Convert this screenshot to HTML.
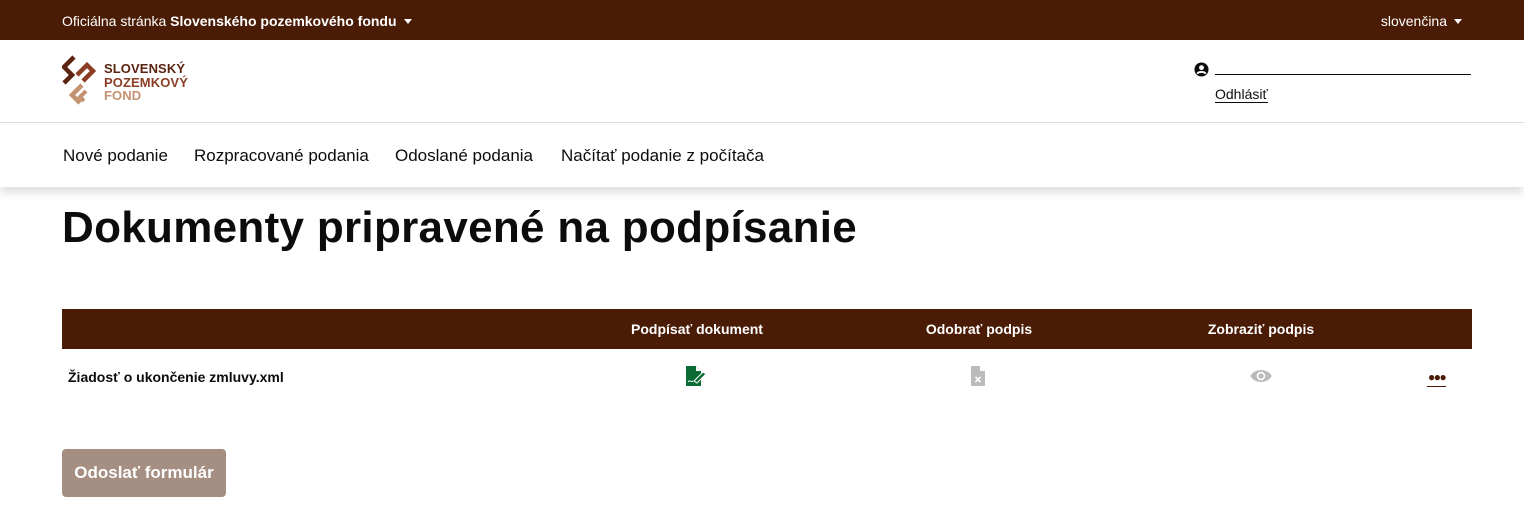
<!DOCTYPE html>
<html><head><meta charset="utf-8"><style>
*{margin:0;padding:0;box-sizing:border-box}
body{width:1524px;height:519px;overflow:hidden;background:#fff;font-family:"Liberation Sans",sans-serif;color:#0b0c0c;position:relative}
.top{position:absolute;left:0;top:0;width:1524px;height:40px;background:#4a1c05;color:#fff;font-size:14px}
.top .l{position:absolute;left:62px;top:13px}
.top .r{position:absolute;right:62px;top:13px}
.caret{display:inline-block;width:0;height:0;border-left:4px solid transparent;border-right:4px solid transparent;border-top:5px solid #fff;margin-left:7px;vertical-align:2px}
.hdr{position:absolute;top:40px;left:0;width:1524px;height:83px;border-bottom:1px solid #ddd}
.nav{position:absolute;top:123px;left:0;width:1524px;height:64px;box-shadow:0 6px 8px rgba(0,0,0,.12);background:#fff}
.nav span{position:absolute;top:23px;font-size:17px}
h1{position:absolute;left:62px;top:203px;font-size:44px;font-weight:bold;letter-spacing:.3px}
.th{position:absolute;left:62px;top:309px;width:1410px;height:40px;background:#4a1c05;color:#fff;font-weight:bold;font-size:14px}
.th span{position:absolute;top:12px;transform:translateX(-50%)}
.row{position:absolute;left:62px;top:349px;width:1410px;height:56px;font-size:14px;font-weight:bold}
.btn{position:absolute;left:62px;top:449px;width:164px;height:48px;background:#a58f82;border-radius:4px;color:#fff;font-weight:bold;font-size:17px;text-align:center;line-height:48px}
</style></head><body>
<div class="top"><span class="l">Oficiálna stránka <b>Slovenského pozemkového fondu</b><i class="caret"></i></span><span class="r">slovenčina<i class="caret"></i></span></div>
<div class="hdr">
<svg style="position:absolute;left:62px;top:15px" width="36" height="52" viewBox="0 0 36 52">
<path d="M12 2 L2 12 L10 20 L2 28" stroke="#5a2410" stroke-width="4.5" fill="none"/>
<path d="M15 20 L25 10 L31 16 L21 26" stroke="#8b3e24" stroke-width="4.5" fill="none"/>
<path d="M20 30 L10 40 L18 48" stroke="#c39270" stroke-width="4.5" fill="none"/>
<path d="M24 36 L18 42 L22 46" stroke="#c39270" stroke-width="4" fill="none"/>
</svg>
<div style="position:absolute;left:104px;top:22px;font-weight:bold;font-size:13px;line-height:13.5px;letter-spacing:.1px"><div style="color:#5a2410">SLOVENSKÝ</div><div style="color:#8b3e24">POZEMKOVÝ</div><div style="color:#c39270">FOND</div></div>
<svg style="position:absolute;left:1194px;top:22px" width="15" height="15" viewBox="0 0 16 16"><circle cx="8" cy="8" r="7.5" fill="#0b0c0c"/><circle cx="8" cy="6" r="2.6" fill="#fff"/><path d="M3.5 12.5c1.5-2.5 7.5-2.5 9 0" stroke="#fff" stroke-width="2" fill="none"/></svg>
<div style="position:absolute;left:1215px;top:34px;width:256px;border-top:1.5px solid #0b0c0c"></div>
<div style="position:absolute;left:1215px;top:46px;font-size:14px;border-bottom:1.5px solid #0b0c0c;line-height:16px">Odhlásiť</div>
</div>
<div class="nav"><span style="left:63px">Nové podanie</span><span style="left:194px">Rozpracované podania</span><span style="left:395px">Odoslané podania</span><span style="left:561px">Načítať podanie z počítača</span></div>
<h1>Dokumenty pripravené na podpísanie</h1>
<div class="th"><span style="left:635px">Podpísať dokument</span><span style="left:917px">Odobrať podpis</span><span style="left:1199px">Zobraziť podpis</span></div>
<div class="row"><span style="position:absolute;left:6px;top:20px">Žiadosť o ukončenie zmluvy.xml</span>
<svg style="position:absolute;left:624px;top:17px" width="22" height="20" viewBox="0 0 22 20"><path d="M0 0h10l5 5v15H0z" fill="#0b6b35"/><path d="M10 0v5h5" fill="#fff"/><path d="M8 15l9-9 3 2-9 9z" fill="#0b6b35" stroke="#fff" stroke-width="1"/><path d="M2 16c2-3 3 1 5-1" stroke="#fff" fill="none"/></svg>
<svg style="position:absolute;left:909px;top:17px" width="14" height="20" viewBox="0 0 14 20"><path d="M0 0h9l5 5v15H0z" fill="#bbb"/><path d="M9 0v5h5" fill="#fff"/><path d="M4.5 11l5 5M9.5 11l-5 5" stroke="#fff" stroke-width="1.6"/></svg>
<svg style="position:absolute;left:1187px;top:19px" width="24" height="16" viewBox="0 0 22 15"><path d="M1 7.5C5 0 17 0 21 7.5 17 15 5 15 1 7.5z" fill="#bbb"/><circle cx="11" cy="7.5" r="4" fill="#fff"/><circle cx="11" cy="7.5" r="2.5" fill="#bbb"/></svg>
<div style="position:absolute;left:1366px;top:21px;font-size:12px;letter-spacing:-1.5px;color:#4a1c05">●●●</div>
<div style="position:absolute;left:1365px;top:37px;width:19px;border-top:1.5px solid #4a1c05"></div>
</div>
<div class="btn">Odoslať formulár</div>
</body></html>
